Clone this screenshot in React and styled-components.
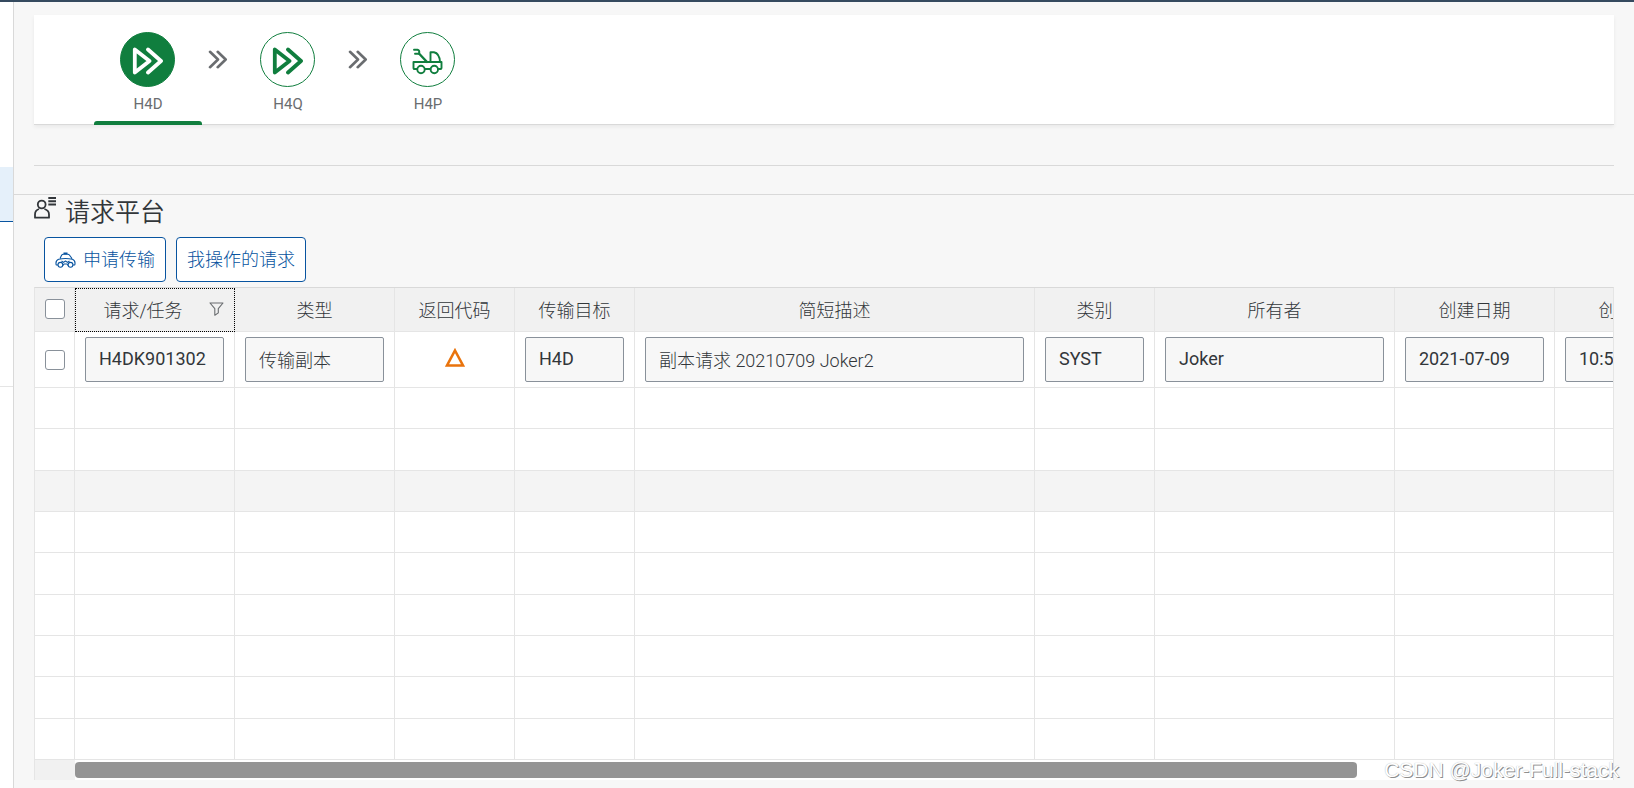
import React from "react";
import styled, { createGlobalStyle, css } from "styled-components";

const colors = {
    shell: "#354a5f",
    page: "#f7f7f7",
    line: "#d9d9d9",
    grid: "#e5e5e5",
    header: "#f1f1f1",
    text: "#32363a",
    label: "#6a6d70",
    field: "#89919a",
    green: "#107e3e",
    blue: "#0854a0",
    orange: "#e9730c",
};

const GlobalStyle = createGlobalStyle`
    *, *::before, *::after {
        box-sizing: border-box;
    }

    body {
        margin: 0;
        background-color: ${colors.page};
        color: ${colors.text};
        font-family: Roboto, "Noto Sans CJK SC", sans-serif;
        font-size: 18px;
        overflow: hidden;
    }

    button, input {
        color: inherit;
        font: inherit;
    }
`;

const Page = styled.div`
    display: flex;
    position: relative;
    min-height: 100vh;
    border-top: 2px solid ${colors.shell};
`;

const Sidebar = styled.aside`
    flex: 0 0 14px;
    border-right: 1px solid ${colors.line};
    background-color: #fff;
`;

const SidebarItem = styled.div`
    height: 165px;
    border-bottom: 1px solid ${(props) => (props.$selected ? colors.blue : "transparent")};

    ${(props) =>
        props.$selected &&
        css`
            height: 55px;
            background-color: #e5f0fa;
        `}

    ${(props) =>
        props.$last &&
        css`
            border-color: ${colors.grid};
        `}
`;

const Main = styled.main`
    flex: 1;
    min-width: 0;
`;

const Landscape = styled.section`
    padding: 13px 20px 40px;
    border-bottom: 1px solid ${colors.line};
`;

const Steps = styled.nav`
    display: flex;
    height: 110px;
    padding-left: 60px;
    border-bottom: 1px solid ${colors.line};
    background-color: #fff;
    box-shadow: 0 2px 4px rgba(0, 0, 0, 0.06);
`;

const StepsRule = styled.div`
    height: 41px;
    margin-bottom: -12px;
    border-bottom: 1px solid ${colors.line};
`;

const Step = styled.button`
    display: flex;
    flex-direction: column;
    align-items: center;
    width: 108px;
    height: 110px;
    padding: 17px 0 0;
    border: 0;
    background: none;
    color: ${colors.label};
    font-size: 15px;
    line-height: 20px;

    &::after {
        content: "";
        width: 100%;
        height: 4px;
        margin-top: auto;
        border-radius: 3px 3px 0 0;
        background-color: ${(props) => (props.$active ? colors.green : "transparent")};
    }
`;

const StepCircle = styled.span`
    display: grid;
    place-items: center;
    width: 55px;
    height: 55px;
    margin: 0 1px 7px 0;
    border: 1px solid ${colors.green};
    border-radius: 50%;
    background-color: ${(props) => (props.$active ? colors.green : "#fff")};
    color: ${(props) => (props.$active ? "#fff" : colors.green)};
`;

const StepArrow = styled.span`
    display: flex;
    justify-content: center;
    width: 32px;
    padding-top: 35px;
    color: ${colors.label};
`;

const Requests = styled.section`
    padding: 0 20px;
`;

const Title = styled.h1`
    display: flex;
    align-items: flex-start;
    gap: 9px;
    margin: 0;
    height: 38px;
    padding-top: 2px;
    font-size: 25px;
    font-weight: 350;
    line-height: 32px;
`;

const Toolbar = styled.div`
    display: flex;
    gap: 10px;
    height: 54px;
    padding: 4px 10px;
`;

const ToolbarButton = styled.button`
    display: flex;
    align-items: center;
    gap: 7px;
    height: 45px;
    padding: 0 10px;
    border: 1px solid ${colors.blue};
    border-radius: 4px;
    background-color: #fff;
    color: ${colors.blue};
    font-weight: 300;
    white-space: nowrap;
`;

const ButtonLabel = styled.span`
    padding-bottom: 4px;
`;

const Grid = styled.div`
    overflow: hidden;
    border: solid ${colors.grid};
    border-width: 0 1px;
    border-top: 1px solid ${colors.line};
    background-color: #fff;
`;

const Table = styled.table`
    width: 1680px;
    border-spacing: 0;
    table-layout: fixed;
`;

const HeaderCell = styled.th`
    height: 44px;
    padding: 0 0 2px;
    border: solid ${colors.grid};
    border-width: 0 1px 1px 0;
    background-color: ${colors.header};
    font-weight: 300;
    outline: ${(props) => (props.$focused ? "1px dotted #000" : "none")};
    outline-offset: -1px;
`;

const HeaderContent = styled.div`
    display: flex;
    align-items: center;
    padding: 0 10px 0 2px;
`;

const HeaderLabel = styled.span`
    flex: 1;
`;

const Row = styled.tr`
    height: 41px;
    background-color: ${(props) => (props.$hovered ? "#f4f4f4" : "#fff")};

    &:nth-child(3n) {
        height: 42px;
    }
`;

const Cell = styled.td`
    padding: ${(props) => (props.$filled ? "5px 10px" : "0")};
    border: solid ${colors.grid};
    border-width: 0 1px 1px 0;
    text-align: center;
    vertical-align: middle;

    svg {
        display: block;
        margin: 0 auto 4px;
    }
`;

const Field = styled.input`
    display: block;
    width: 100%;
    height: 45px;
    padding: 0 13px 2px;
    border: 1px solid ${colors.field};
    border-radius: 2px;
    background-color: ${colors.page};
    font-weight: ${(props) => (props.$light ? 300 : 400)};
    outline: none;
`;

const Checkbox = styled.input`
    display: block;
    width: 20px;
    height: 20px;
    margin: 0 auto;
    border: 1px solid ${colors.field};
    border-radius: 3px;
    background-color: #fff;
    appearance: none;
`;

const ScrollBar = styled.div`
    display: flex;
    height: 20px;
    padding: 2px 0;
    border-left: 40px solid ${colors.header};
`;

const ScrollThumb = styled.div`
    width: calc(100% * 5 / 6);
    height: 16px;
    border-radius: 4px;
    background-color: #949494;
`;

const Watermark = styled.div`
    position: absolute;
    right: 15px;
    bottom: 5px;
    color: #fff;
    font-family: "Liberation Sans", sans-serif;
    font-size: 21px;
    line-height: 26px;
    text-shadow: 0 0 1px #aaa, 1px 1px 0 #8c8c8c;
`;

const FastForwardIcon = () => (
    <svg width="31" height="31" fill="none" stroke="currentColor" strokeWidth="3.8" strokeLinejoin="round" strokeLinecap="round" aria-hidden="true">
        <path d="M2.8 5.5v23L17.5 17zM16 5.5 29 17 16 28.5" />
    </svg>
);

const TowTruckIcon = () => (
    <svg width="31" height="31" fill="none" stroke="currentColor" strokeWidth="1.9" strokeLinejoin="round" strokeLinecap="round" aria-hidden="true">
        <path d="M5 25H2.5Q1.5 25 1.5 24v-6h28V24q0 1-1 1H26M13 25h5.5" />
        <circle cx="9" cy="25.5" r="3.7" />
        <circle cx="22.3" cy="25.5" r="3.7" />
        <path d="M18.5 18V8.2h3.5q5.5 1 6 9.8" />
        <path d="M2 5.7h3.5q2 .3 1.8 2.8l-.4 1.2H3" />
        <path strokeWidth="2.4" d="m7 9.5 8 8.5" />
    </svg>
);

const DoubleChevronIcon = () => (
    <svg width="20" height="19" fill="none" stroke="currentColor" strokeWidth="2.6" strokeLinejoin="round" strokeLinecap="round" aria-hidden="true">
        <path d="m2 1.8 8 7.7-8 7.7M9.7 1.8l8 7.7-8 7.7" />
    </svg>
);

const PersonListIcon = () => (
    <svg width="22" height="23" fill="none" stroke="currentColor" strokeWidth="1.8" aria-hidden="true">
        <circle cx="7.7" cy="7.5" r="3.9" />
        <path strokeLinejoin="round" d="M5 12Q1 13.2 1 17.5v3.2h14v-3.2Q15 13.2 10.4 12" />
        <path strokeWidth="2" d="M14.3 1H22M14.3 4.2H22M14.3 7.4H22" />
    </svg>
);

const TaxiIcon = () => (
    <svg width="21" height="16" fill="none" stroke="currentColor" strokeWidth="1.1" strokeLinejoin="round" aria-hidden="true">
        <path d="M5 6.5 6.6 3.2q.6-1 1.6-1h4.6q1 0 1.6.8L17 6.5M3 13H1.2Q.2 8.6 3.6 7.3q6.9-1.6 13.8 0 3.4 1.3 2.4 5.7H18" />
        <path strokeWidth="1.8" d="M8.5 1.4h4" />
        <circle cx="5.4" cy="12.8" r="2.4" />
        <circle cx="15.5" cy="12.8" r="2.4" />
        <path d="m6.5 9 2 1.4 2-1.4 2 1.4 2-1.4M8 13.5l1-1.5h3l1 1.5" />
    </svg>
);

const FilterIcon = () => (
    <svg width="15" height="14" fill="none" stroke={colors.label} strokeWidth="1.1" strokeLinejoin="round" aria-hidden="true">
        <path d="M1 1h13L9.3 6.7v4.2l-3.5 2.3V6.7z" />
    </svg>
);

const WarningIcon = () => (
    <svg width="20" height="20" fill="none" stroke={colors.orange} strokeWidth="2.6" role="img" aria-label="警告">
        <path d="M10 2.5 18 17.5H2z" />
    </svg>
);

const steps = [
    { name: "H4D", icon: <FastForwardIcon />, active: true },
    { name: "H4Q", icon: <FastForwardIcon /> },
    { name: "H4P", icon: <TowTruckIcon /> },
];

const columns = [
    { title: "请求/任务", width: 160, value: "H4DK901302", focused: true },
    { title: "类型", width: 160, value: "传输副本" },
    { title: "返回代码", width: 120, icon: <WarningIcon /> },
    { title: "传输目标", width: 120, value: "H4D" },
    { title: "简短描述", width: 400, value: "副本请求 20210709 Joker2" },
    { title: "类别", width: 120, value: "SYST" },
    { title: "所有者", width: 240, value: "Joker" },
    { title: "创建日期", width: 160, value: "2021-07-09" },
    { title: "创建时间", width: 160, value: "10:56:00" },
];

const emptyRows = [...Array(9).keys()];

const Landscapes = () => (
    <Steps aria-label="系统">
        {steps.map(({ name, icon, active }, index) => (
            <React.Fragment key={name}>
                {index > 0 && (
                    <StepArrow>
                        <DoubleChevronIcon />
                    </StepArrow>
                )}
                <Step type="button" $active={active}>
                    <StepCircle $active={active}>{icon}</StepCircle>
                    {name}
                </Step>
            </React.Fragment>
        ))}
    </Steps>
);

const RequestTable = () => (
    <Grid>
        <Table>
            <colgroup>
                <col width={40} />
                {columns.map(({ title, width }) => (
                    <col key={title} width={width} />
                ))}
            </colgroup>
            <thead>
                <tr>
                    <HeaderCell>
                        <Checkbox type="checkbox" aria-label="全选" />
                    </HeaderCell>
                    {columns.map(({ title, focused }) => (
                        <HeaderCell key={title} $focused={focused}>
                            {focused ? (
                                <HeaderContent>
                                    <HeaderLabel>{title}</HeaderLabel>
                                    <FilterIcon />
                                </HeaderContent>
                            ) : (
                                title
                            )}
                        </HeaderCell>
                    ))}
                </tr>
            </thead>
            <tbody>
                <Row>
                    <Cell>
                        <Checkbox type="checkbox" aria-label="选择 H4DK901302" />
                    </Cell>
                    {columns.map(({ title, value, icon }) => (
                        <Cell key={title} $filled>
                            {icon || (
                                <Field
                                    readOnly
                                    aria-label={title}
                                    value={value}
                                    $light={/[^\x00-\x7f]/.test(value)}
                                />
                            )}
                        </Cell>
                    ))}
                </Row>
                {emptyRows.map((row) => (
                    <Row key={row} $hovered={row === 2}>
                        <Cell />
                        {columns.map(({ title }) => (
                            <Cell key={title} />
                        ))}
                    </Row>
                ))}
            </tbody>
        </Table>
        <ScrollBar>
            <ScrollThumb />
        </ScrollBar>
    </Grid>
);

export default function App() {
    return (
        <>
            <GlobalStyle />
            <Page>
                <Sidebar>
                    <SidebarItem />
                    <SidebarItem $selected />
                    <SidebarItem $last />
                </Sidebar>
                <Main>
                    <Landscape>
                        <Landscapes />
                        <StepsRule />
                    </Landscape>
                    <Requests>
                        <Title>
                            <PersonListIcon />
                            请求平台
                        </Title>
                        <Toolbar>
                            <ToolbarButton type="button">
                                <TaxiIcon />
                                <ButtonLabel>申请传输</ButtonLabel>
                            </ToolbarButton>
                            <ToolbarButton type="button">
                                <ButtonLabel>我操作的请求</ButtonLabel>
                            </ToolbarButton>
                        </Toolbar>
                        <RequestTable />
                    </Requests>
                </Main>
                <Watermark>CSDN @Joker-Full-stack</Watermark>
            </Page>
        </>
    );
}
